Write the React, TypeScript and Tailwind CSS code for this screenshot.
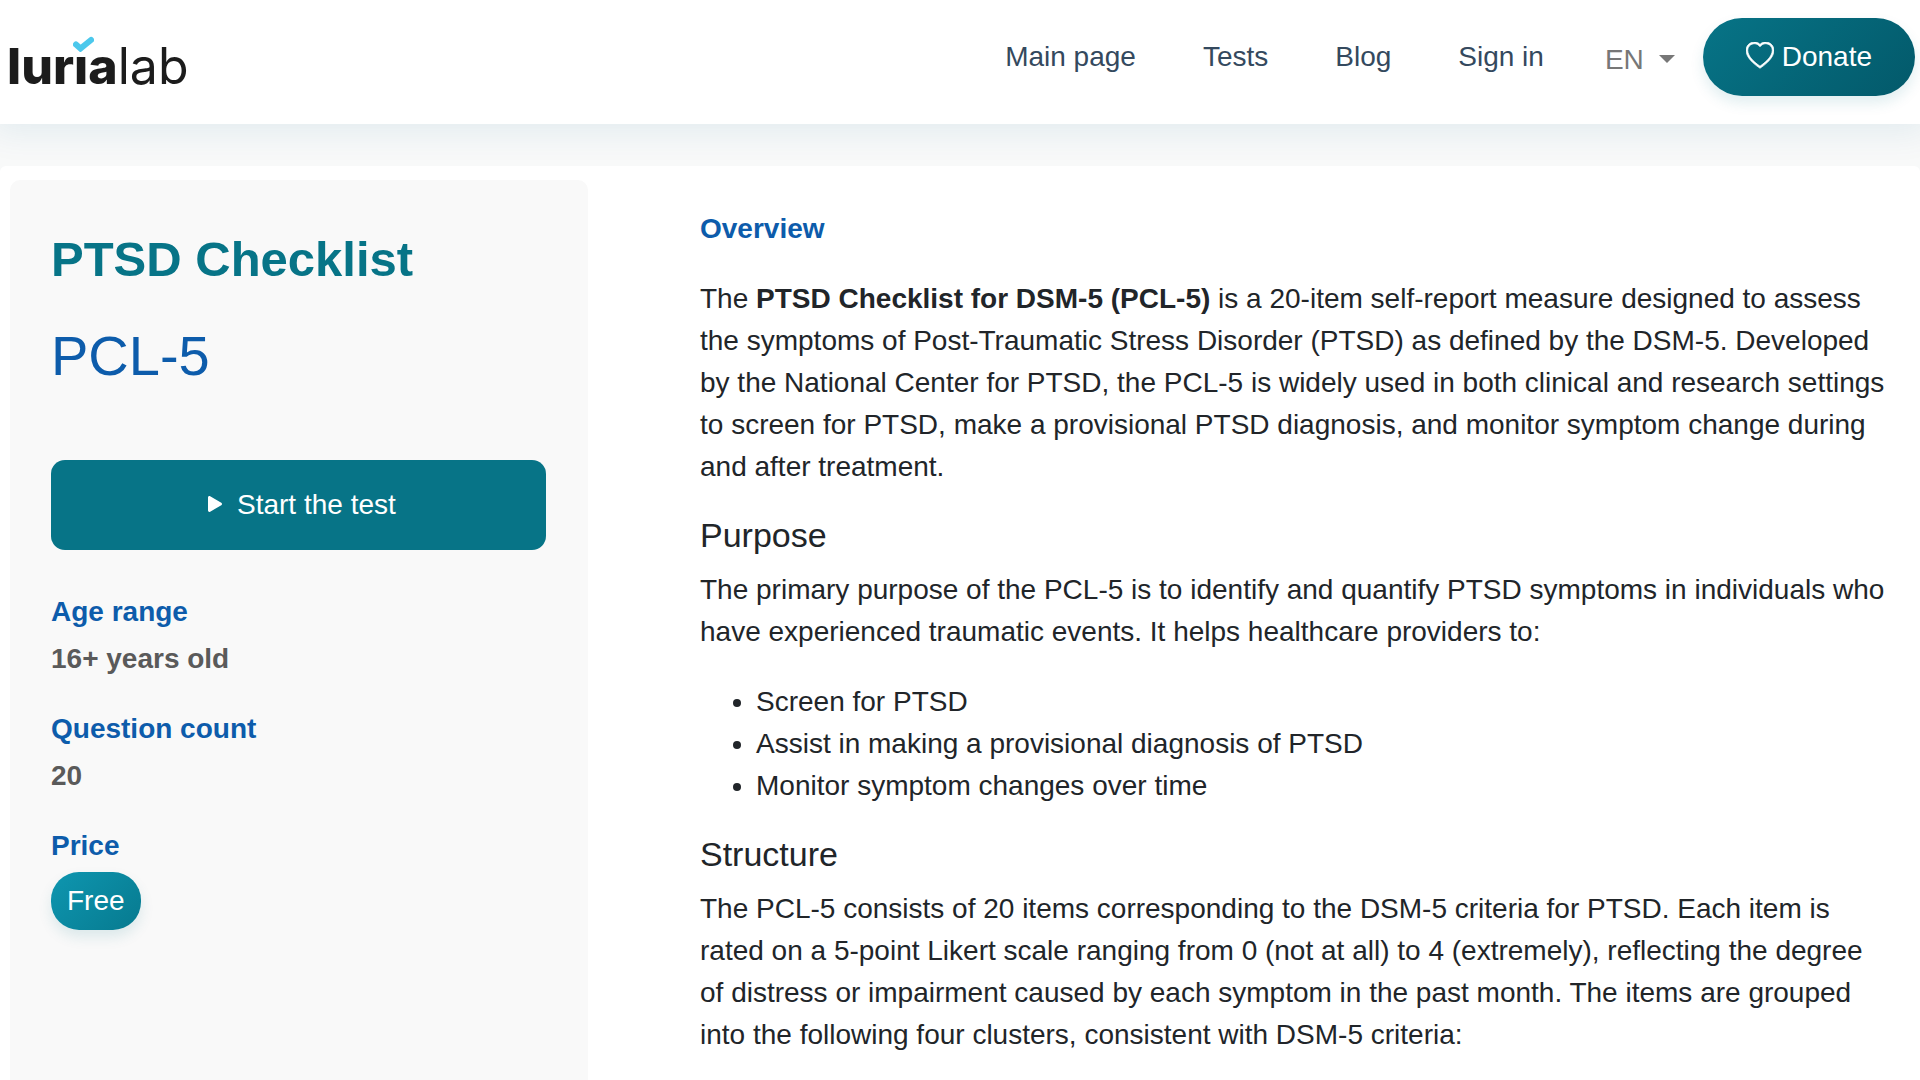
import type { ReactNode } from "react";
import { BsHeart, BsPlayFill } from "react-icons/bs";

const NAV_LINKS = ["Main page", "Tests", "Blog", "Sign in"];

const PURPOSES = [
  "Screen for PTSD",
  "Assist in making a provisional diagnosis of PTSD",
  "Monitor symptom changes over time",
];

export default function App() {
  return (
    <div className="flex min-h-screen flex-col bg-[#f8f9f9] font-['Liberation_Sans',Arial,sans-serif] text-[28px] leading-[42px] text-[#212529]">
      <SiteHeader />
      <main className="mt-[42px] flex flex-1 rounded-t-md bg-white pt-3.5 pl-2.5">
        <TestSummary />
        <TestDescription />
      </main>
    </div>
  );
}

function SiteHeader() {
  return (
    <header className="relative flex items-start justify-between bg-white pt-[18px] pr-[5px] pb-7 pl-[7px] shadow-[0_0_32px_8px_rgba(7,105,140,0.09)]">
      <Logo />
      <div className="flex items-center">
        <nav className="flex gap-[67px] text-[#34495e]" aria-label="Primary">
          {NAV_LINKS.map((label) => (
            <a key={label} href="#">
              {label}
            </a>
          ))}
        </nav>
        <LanguageSelect />
        <a
          className="ml-7 rounded-full bg-linear-135 from-[#077487] to-[#03596a] px-[43px] py-[18px] text-white shadow-[0_7px_14px_rgba(7,116,133,0.12)]"
          href="#"
        >
          <BsHeart className="inline size-7 align-[-4px]" strokeWidth={0.4} aria-hidden="true" />{" "}
          Donate
        </a>
      </div>
    </header>
  );
}

function Logo() {
  return (
    <a
      className="relative mt-[18px] flex font-[Inter,sans-serif] text-[50px] leading-[60px] text-[#1c1c1c]"
      href="#"
      aria-label="lurialab"
    >
      <span className="font-extrabold">lurıa</span>
      <span>lab</span>
      <svg
        className="absolute top-0 left-[66px] h-4 w-[21px]"
        viewBox="0 0 21 16"
        fill="none"
        aria-hidden="true"
      >
        <path d="M3 8.500l4.500 4L18 4" stroke="#4cc8ec" strokeWidth="6" strokeLinecap="round" />
      </svg>
    </a>
  );
}

function LanguageSelect() {
  return (
    <div className="relative ml-[61px] pt-1.5 text-[#777777]">
      <select
        className="block w-[70px] appearance-none bg-transparent leading-[42px]"
        aria-label="Language"
        defaultValue="EN"
      >
        <option>EN</option>
      </select>
      <svg
        className="pointer-events-none absolute top-[22px] right-0 h-2 w-4"
        viewBox="0 0 16 8"
        fill="currentColor"
        aria-hidden="true"
      >
        <path d="M0 0h16L8 8z" />
      </svg>
    </div>
  );
}

function TestSummary() {
  return (
    <aside className="w-[578px] shrink-0 rounded-t-[10px] bg-[#f9f9f9] pt-[43px] pr-[42px] pb-[42px] pl-[41px]">
      <h1 className="text-[49px] leading-[73px] font-bold text-[#077487]">PTSD Checklist</h1>
      <p className="mt-[26px] text-[56px] leading-[68px] text-[#0d5cab]">PCL-5</p>
      <button
        className="mt-[70px] w-full rounded-[14px] bg-[#077487] py-6 text-white"
        type="button"
      >
        <BsPlayFill className="inline size-7 align-[-4px]" aria-hidden="true" /> Start the test
      </button>
      <dl className="mt-[41px] space-y-7">
        <SummaryItem label="Age range">16+ years old</SummaryItem>
        <SummaryItem label="Question count">20</SummaryItem>
        <SummaryItem label="Price">
          <span className="inline-block rounded-[28px] bg-linear-135 from-[#0e96b0] to-[#077a8f] px-4 py-2 font-normal text-white shadow-[0_7px_14px_rgba(7,116,133,0.12)]">
            Free
          </span>
        </SummaryItem>
      </dl>
    </aside>
  );
}

function SummaryItem({ label, children }: { label: string; children: ReactNode }) {
  return (
    <div className="space-y-[5px] font-bold">
      <dt className="text-[#0d5cab]">{label}</dt>
      <dd className="text-[#5a5a5a]">{children}</dd>
    </div>
  );
}

function TestDescription() {
  return (
    <article className="min-w-0 flex-1 pt-7 pr-7 pl-28">
      <h2 className="mb-7 font-bold text-[#0d5cab]">Overview</h2>
      <p className="mb-7">
        The <strong>PTSD Checklist for DSM-5 (PCL-5)</strong> is a 20-item self-report measure
        designed to assess the symptoms of Post-Traumatic Stress Disorder (PTSD) as defined by the
        DSM-5. Developed by the National Center for PTSD, the PCL-5 is widely used in both clinical
        and research settings to screen for PTSD, make a provisional PTSD diagnosis, and monitor
        symptom change during and after treatment.
      </p>

      <SectionHeading>Purpose</SectionHeading>
      <p className="mb-7">
        The primary purpose of the PCL-5 is to identify and quantify PTSD symptoms in individuals
        who have experienced traumatic events. It helps healthcare providers to:
      </p>
      <ul className="mb-7 list-disc pl-14">
        {PURPOSES.map((purpose) => (
          <li key={purpose}>{purpose}</li>
        ))}
      </ul>

      <SectionHeading>Structure</SectionHeading>
      <p>
        The PCL-5 consists of 20 items corresponding to the DSM-5 criteria for PTSD. Each item is
        rated on a 5-point Likert scale ranging from 0 (not at all) to 4 (extremely), reflecting the
        degree of distress or impairment caused by each symptom in the past month. The items are
        grouped into the following four clusters, consistent with DSM-5 criteria:
      </p>
    </article>
  );
}

function SectionHeading({ children }: { children: ReactNode }) {
  return <h3 className="mb-[15px] text-[34px] leading-[38px]">{children}</h3>;
}
